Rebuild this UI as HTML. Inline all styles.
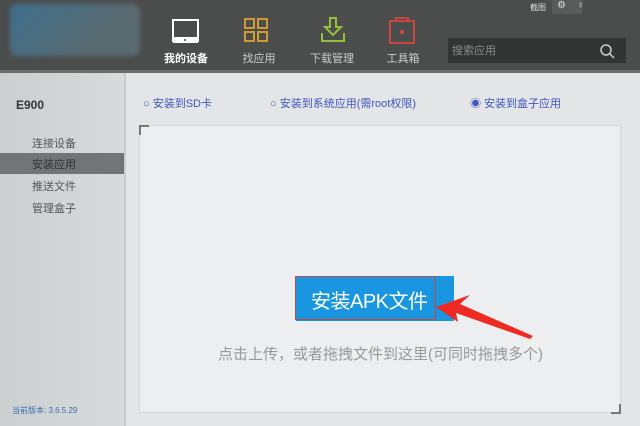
<!DOCTYPE html><html><head><meta charset="utf-8"><style>
body{margin:0;width:640px;height:426px;overflow:hidden;font-family:"Liberation Sans","Noto Sans CJK SC",sans-serif;background:#e3e5e6;position:relative}
.a{position:absolute}
.hd{left:0;top:0;width:640px;height:70px;background:#4b4d4d}
.nav{color:#ccc;font-size:11px;text-align:center;width:70px}
</style></head><body>
<div class="a hd"></div>
<div class="a" style="left:10px;top:4px;width:130px;height:52px;border-radius:8px;background:linear-gradient(135deg,#3f6f8e,#586a70 70%);filter:blur(2px)"></div>
<div class="a" style="left:0;top:70px;width:640px;height:3px;background:#6c6e6e"></div>
<svg class="a" style="left:0;top:0" width="640" height="70">
<rect x="173" y="20" width="25" height="21" fill="none" stroke="#fff" stroke-width="2"/><rect x="173" y="37" width="25" height="6" fill="#fff"/><circle cx="185" cy="40" r="1" fill="#444"/>
<g fill="none" stroke="#d19a32" stroke-width="2"><rect x="245" y="19" width="9" height="9"/><rect x="258" y="19" width="9" height="9"/><rect x="245" y="32" width="9" height="9"/><rect x="258" y="32" width="9" height="9"/></g>
<g fill="none" stroke="#97c03a" stroke-width="2"><path d="M322 33v8h22v-8"/><path d="M330 18h6v9h5l-8 8-8-8h5z"/></g>
<rect x="390" y="21" width="24" height="22" fill="none" stroke="#c6473f" stroke-width="2"/><path d="M396 21v-3h12v3" fill="none" stroke="#c6473f" stroke-width="2"/><rect x="400" y="30" width="4" height="4" fill="#c6473f"/>
<rect x="448" y="38" width="178" height="25" fill="#333535"/>
<circle cx="606" cy="50" r="5" fill="none" stroke="#ccc" stroke-width="1.5"/><path d="M610 54l4 4" stroke="#ccc" stroke-width="1.5"/>
<rect x="552" y="0" width="30" height="14" fill="#5a5c5c"/>
</svg>
<div class="a nav" style="left:151px;top:50px;color:#fff;font-weight:bold">我的设备</div>
<div class="a nav" style="left:224px;top:50px">找应用</div>
<div class="a nav" style="left:297px;top:50px">下载管理</div>
<div class="a nav" style="left:368px;top:50px">工具箱</div>
<div class="a" style="left:452px;top:42px;color:#8a8c8c;font-size:11px">搜索应用</div>
<div class="a" style="left:530px;top:2px;color:#ddd;font-size:8px">截图</div>
<div class="a" style="left:557px;top:0px;color:#ddd;font-size:10px">⚙</div>
<div class="a" style="left:577px;top:0px;color:#ddd;font-size:10px">♀</div>
<div class="a" style="left:0;top:73px;width:124px;height:353px;background:linear-gradient(90deg,#cbcfd0,#d8dbdc)"></div>
<div class="a" style="left:124px;top:73px;width:2px;height:353px;background:#c9cccd"></div>
<div class="a" style="left:16px;top:98px;font-size:12px;font-weight:bold;color:#333">E900</div>
<div class="a" style="left:32px;top:135px;font-size:11px;color:#555">连接设备</div>
<div class="a" style="left:0;top:153px;width:124px;height:21px;background:#717575"></div>
<div class="a" style="left:32px;top:156px;font-size:11px;color:#333">安装应用</div>
<div class="a" style="left:32px;top:178px;font-size:11px;color:#555">推送文件</div>
<div class="a" style="left:32px;top:200px;font-size:11px;color:#555">管理盒子</div>
<div class="a" style="left:12px;top:405px;font-size:8px;color:#3a6fb0">当前版本: 3.6.5.29</div>
<div class="a" style="left:143px;top:95px;font-size:11px;color:#3f57c0">○ 安装到SD卡</div>
<div class="a" style="left:270px;top:95px;font-size:11px;color:#3f57c0">○ 安装到系统应用(需root权限)</div>
<div class="a" style="left:470px;top:95px;font-size:11px;color:#3f57c0">◉ 安装到盒子应用</div>
<div class="a" style="left:139px;top:125px;width:480px;height:286px;background:#eceeef;border:1px solid #d4d6d7"></div>
<div class="a" style="left:139px;top:125px;width:8px;height:8px;border-left:2px solid #777;border-top:2px solid #777"></div>
<div class="a" style="left:611px;top:404px;width:8px;height:8px;border-right:2px solid #777;border-bottom:2px solid #777"></div>
<div class="a" style="left:296px;top:276px;width:158px;height:45px;background:#1a96e0"></div>
<div class="a" style="left:295px;top:276px;width:141px;height:44px;border:1px solid #c04848;box-sizing:border-box"></div>
<div class="a" style="left:311px;top:285px;font-size:20px;color:#fff;letter-spacing:-0.5px">安装APK文件</div>
<svg class="a" style="left:430px;top:295px" width="110" height="45"><path d="M6 12 L40 0 L30 9 L103 41 L100 44 L26 18 L28 27Z" fill="#ee2a22"/></svg>
<div class="a" style="left:218px;top:343px;font-size:15px;color:#999">点击上传，或者拖拽文件到这里(可同时拖拽多个)</div>
</body></html>
